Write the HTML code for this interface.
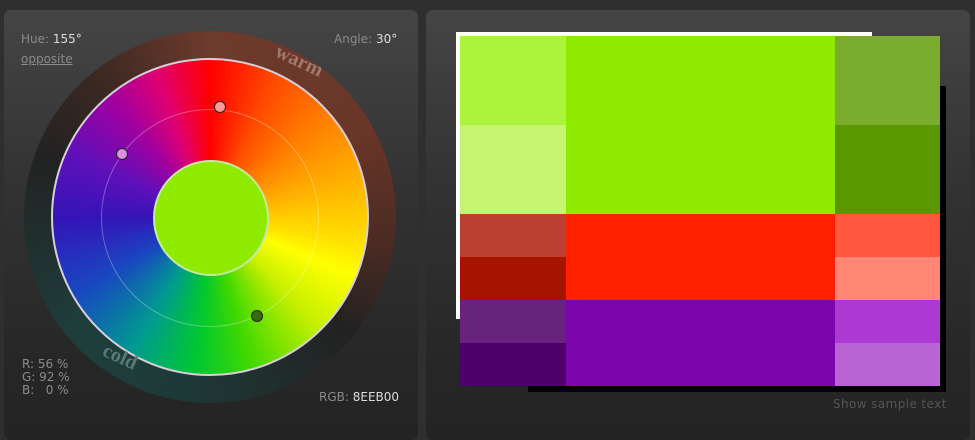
<!DOCTYPE html>
<html><head><style>
body{margin:0;width:975px;height:430px;background:#2f2f2f;position:relative;overflow:hidden;font-family:"DejaVu Sans","Liberation Sans",sans-serif;}
.p{position:absolute;top:10px;height:430px;border-radius:7px;background:linear-gradient(#454545,#333 40%,#262626 85%,#242424);}
.t{position:absolute;font-size:12px;color:#8a8a8a;}
.t b{font-weight:normal;color:#ddd;}
.c{position:absolute;border-radius:50%;}
.d{position:absolute;width:10px;height:10px;border-radius:50%;border:1px solid #222;margin:-6px 0 0 -6px;}
.g{position:absolute;}
</style></head><body>
<div class="p" style="left:4px;width:414px"></div>
<div class="p" style="left:426px;width:544px"></div>
<div class="c" style="left:24px;top:31px;width:372px;height:372px;background:conic-gradient(#6e3a2c 0deg,#6a3628 60deg,#4a2a22 100deg,#222 130deg,#1e3a38 190deg,#1e3e3c 230deg,#222 290deg,#3a2822 320deg,#6e3a2c 360deg)"></div>
<div class="c" style="left:51px;top:58px;width:314px;height:314px;border:2px solid #d8d0d8;background:conic-gradient(#ff0000 0deg,#ff4a00 25deg,#ff8000 50deg,#ffb000 75deg,#ffe000 100deg,#ffff00 112deg,#c8f000 135deg,#40d800 165deg,#00c830 185deg,#009a90 210deg,#1848c0 240deg,#3414b8 270deg,#6010b8 295deg,#a000a0 320deg,#e00070 340deg,#ff0000 360deg)"></div>
<div class="c" style="left:101px;top:109px;width:216px;height:216px;border:1px solid rgba(255,255,255,.3)"></div>
<div class="c" style="left:153px;top:160px;width:112px;height:112px;border:2px solid #c8e8a0;background:#8eeb00"></div>
<div class="d" style="left:220px;top:107px;background:#ff9a9a"></div>
<div class="d" style="left:122px;top:154px;background:#d890e0"></div>
<div class="d" style="left:257px;top:316px;background:#3a6a10"></div>
<div class="t" style="left:21px;top:32px">Hue: <b>155°</b></div>
<div class="t" style="left:21px;top:52px;text-decoration:underline">opposite</div>
<div class="t" style="left:334px;top:32px">Angle: <b>30°</b></div>
<div class="t" style="left:274px;top:50px;font-family:'Liberation Serif',serif;font-size:20px;font-weight:bold;color:#a07a70;transform:rotate(25deg)">warm</div>
<div class="t" style="left:102px;top:346px;font-family:'Liberation Serif',serif;font-size:20px;font-weight:bold;color:#5a7a78;transform:rotate(25deg)">cold</div>
<div class="t" style="left:22px;top:358px;line-height:13px">R: 56 %<br>G: 92 %<br>B: &nbsp; 0 %</div>
<div class="t" style="left:319px;top:390px">RGB: <b>8EEB00</b></div>
<div class="g" style="left:456px;top:32px;width:416px;height:287px;background:#fff"></div>
<div class="g" style="left:528px;top:86px;width:418px;height:306px;background:#000"></div>
<div class="g" style="left:460px;top:36px;width:106px;height:89px;background:#acf43c"></div>
<div class="g" style="left:460px;top:125px;width:106px;height:89px;background:#c4f470"></div>
<div class="g" style="left:566px;top:36px;width:269px;height:178px;background:#8eeb00"></div>
<div class="g" style="left:835px;top:36px;width:105px;height:89px;background:#7aac2e"></div>
<div class="g" style="left:835px;top:125px;width:105px;height:89px;background:#5a9800"></div>
<div class="g" style="left:460px;top:214px;width:106px;height:43px;background:#bc4032"></div>
<div class="g" style="left:460px;top:257px;width:106px;height:43px;background:#a61400"></div>
<div class="g" style="left:566px;top:214px;width:269px;height:86px;background:#ff2000"></div>
<div class="g" style="left:835px;top:214px;width:105px;height:43px;background:#ff5640"></div>
<div class="g" style="left:835px;top:257px;width:105px;height:43px;background:#ff8674"></div>
<div class="g" style="left:460px;top:300px;width:106px;height:43px;background:#67237e"></div>
<div class="g" style="left:460px;top:343px;width:106px;height:43px;background:#4e006a"></div>
<div class="g" style="left:566px;top:300px;width:269px;height:86px;background:#7b06ab"></div>
<div class="g" style="left:835px;top:300px;width:105px;height:43px;background:#ac3ad2"></div>
<div class="g" style="left:835px;top:343px;width:105px;height:43px;background:#b864d4"></div>
<div class="t" style="left:833px;top:397px;color:#555;letter-spacing:0.4px">Show sample text</div>
</body></html>
